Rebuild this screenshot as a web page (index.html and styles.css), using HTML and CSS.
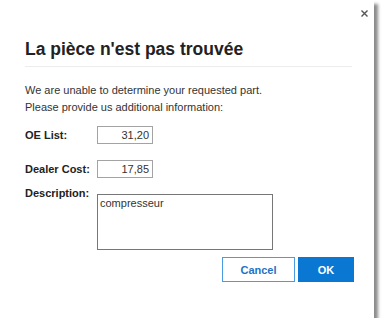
FILE: index.html
```html
<!DOCTYPE html>
<html lang="fr">
<head>
    <meta charset="UTF-8">
    <meta name="viewport" content="width=device-width, initial-scale=1.0">
    <title>La pièce n'est pas trouvée</title>
    <link rel="stylesheet" href="styles.css">
</head>
<body>

    <div class="dialog">
        <button class="close" title="Fermer">
            <svg width="7" height="7" viewBox="0 0 7 7">
                <path d="M0.5 0.5 L6.5 6.5 M6.5 0.5 L0.5 6.5" stroke="#555" stroke-width="1.4" fill="none"/>
            </svg>
        </button>

        <h2 class="title">La pièce n'est pas trouvée</h2>

        <p class="intro">
            We are unable to determine your requested part.<br>
            Please provide us additional information:
        </p>

        <div class="field field-first">
            <label for="oe-list">OE List:</label>
            <input type="text" id="oe-list" value="31,20">
        </div>

        <div class="field">
            <label for="dealer-cost">Dealer Cost:</label>
            <input type="text" id="dealer-cost" value="17,85">
        </div>

        <div class="field field-top">
            <label for="description">Description:</label>
            <textarea id="description">compresseur</textarea>
        </div>

        <div class="actions">
            <button class="btn btn-cancel">Cancel</button>
            <button class="btn btn-ok">OK</button>
        </div>
    </div>

</body>
</html>
```

FILE: styles.css
```css
body {
    font-family: "Liberation Sans", Arial, sans-serif;
    background-color: white;
    margin: 0;
    padding: 0;
}
.dialog {
    position: relative;
    width: 374px;
    height: 318px;
    box-sizing: border-box;
    padding: 38px 20px 0 25px;
    background-color: white;
    box-shadow: 4px 4px 3px rgba(0, 0, 0, 0.45);
}
.close {
    position: absolute;
    top: 9px;
    right: 5px;
    width: 9px;
    height: 9px;
    padding: 1px;
    border: none;
    background: none;
    cursor: pointer;
    line-height: 0;
}
.title {
    margin: 0 2px 0 0;
    padding-bottom: 6px;
    font-size: 17.5px;
    line-height: 22px;
    font-weight: bold;
    color: #222;
    border-bottom: 1px solid #ececec;
}
.intro {
    margin: 15px 0 0;
    font-size: 11px;
    line-height: 17px;
    color: #333;
}
.field {
    display: flex;
    align-items: center;
    margin-top: 16px;
}
.field-first {
    margin-top: 10px;
}
.field-top {
    align-items: flex-start;
    margin-top: 7px;
}
.field label {
    width: 72px;
    font-size: 11px;
    line-height: 17px;
    font-weight: bold;
    color: #222;
}
.field input {
    width: 56px;
    height: 18px;
    box-sizing: border-box;
    padding: 0 3px;
    border: 1px solid #a3a3a3;
    font-family: inherit;
    font-size: 11px;
    color: #333;
    text-align: right;
}
.field textarea {
    width: 176px;
    height: 56px;
    box-sizing: border-box;
    margin: 9px 0 0;
    padding: 2px 2px;
    border: 1px solid #777;
    font-family: inherit;
    font-size: 11px;
    line-height: 13px;
    color: #333;
    resize: none;
}
.actions {
    display: flex;
    justify-content: flex-end;
    gap: 3px;
    margin-top: 7px;
}
.btn {
    height: 25px;
    box-sizing: border-box;
    padding: 0;
    font-family: inherit;
    font-size: 11px;
    font-weight: bold;
    cursor: pointer;
}
.btn-cancel {
    width: 73px;
    background-color: white;
    color: #1f72c4;
    border: 1px solid #4a9be0;
}
.btn-ok {
    width: 56px;
    background-color: #0a78d2;
    color: white;
    border: 1px solid #0a78d2;
}
```
